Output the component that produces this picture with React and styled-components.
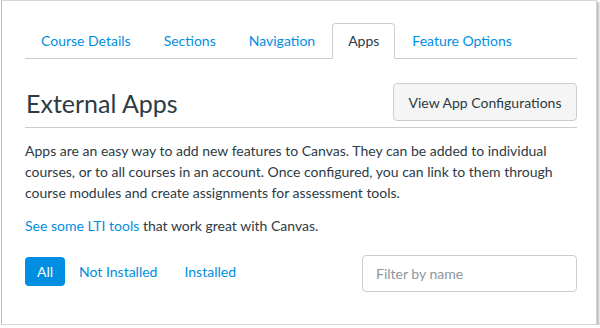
import React from 'react';
import styled, { createGlobalStyle } from 'styled-components';

const GlobalStyle = createGlobalStyle`
  html, body {
    margin: 0;
    padding: 0;
    background: #ffffff;
  }
  body {
    font-family: Lato, "Open Sans", "Liberation Sans", sans-serif;
    color: #2d3b45;
  }
`;

const Frame = styled.div`
  box-sizing: border-box;
  margin: 0 2px 0 1px;
  width: 596px;
  height: 325px;
  border: 1px solid #d6d6d6;
  border-left-color: #bdbdbd;
  box-shadow: 2px 2px 2px rgba(0, 0, 0, 0.28);
  padding: 21px 19px 0 23px;
`;

const TabBar = styled.div`
  display: flex;
  align-items: flex-end;
  height: 36px;
  border-bottom: 1px solid #c7cdd1;
`;

const Tab = styled.div`
  box-sizing: border-box;
  height: ${p => (p.active ? '36px' : '34px')};
  margin-bottom: ${p => (p.active ? '-1px' : '0')};
  padding: 0 15px 2px;
  margin-right: ${p => p.gap || 0}px;
  display: flex;
  align-items: center;
  font-size: 14px;
  color: ${p => (p.active ? '#2d3b45' : '#008ee2')};
  background: #ffffff;
  border: 1px solid ${p => (p.active ? '#c7cdd1' : 'transparent')};
  border-bottom-color: ${p => (p.active ? '#ffffff' : 'transparent')};
  border-radius: 4px 4px 0 0;
`;

const HeaderRow = styled.div`
  display: flex;
  justify-content: space-between;
  align-items: flex-end;
  height: 62px;
  padding-bottom: 6px;
  border-bottom: 1px solid #c7cdd1;
`;

const Title = styled.h1`
  margin: 0 0 3px;
  padding-left: 1px;
  font-size: 25px;
  line-height: 30px;
  font-weight: 400;
  color: #2d3b45;
`;

const Button = styled.button`
  box-sizing: border-box;
  width: 184px;
  height: 38px;
  background: #f5f5f5;
  border: 1px solid #c7cdd1;
  border-radius: 4px;
  font-family: inherit;
  font-size: 14px;
  color: #2d3b45;
  padding: 0;
`;

const Description = styled.p`
  margin: 12px 0 0;
  font-size: 14px;
  line-height: 21px;
  color: #2d3b45;
`;

const Link = styled.a`
  color: #008ee2;
  text-decoration: none;
`;

const Note = styled.p`
  margin: 12px 0 0;
  font-size: 14px;
  line-height: 21px;
`;

const FilterRow = styled.div`
  display: flex;
  align-items: flex-start;
  justify-content: space-between;
  margin-top: 19px;
`;

const Pills = styled.div`
  display: flex;
  align-items: center;
  margin-top: 2px;
`;

const Pill = styled.div`
  box-sizing: border-box;
  height: 29px;
  padding: ${p => (p.active ? '0 12px' : '0 13px 0 14px')};
  display: flex;
  align-items: center;
  border-radius: 4px;
  font-size: 14px;
  background: ${p => (p.active ? '#008ee2' : 'transparent')};
  color: ${p => (p.active ? '#ffffff' : '#008ee2')};
`;

const Search = styled.input`
  box-sizing: border-box;
  width: 215px;
  height: 37px;
  border: 1px solid #c7cdd1;
  border-radius: 4px;
  padding: 0 13px;
  font-family: inherit;
  font-size: 14px;
  color: #2d3b45;
  &::placeholder {
    color: #8b969e;
  }
`;

export default function App() {
  return (
    <>
      <GlobalStyle />
      <Frame>
        <TabBar>
          <Tab gap={1}>Course Details</Tab>
          <Tab gap={1}>Sections</Tab>
          <Tab gap={1}>Navigation</Tab>
          <Tab active gap={1}>Apps</Tab>
          <Tab>Feature Options</Tab>
        </TabBar>
        <HeaderRow>
          <Title>External Apps</Title>
          <Button>View App Configurations</Button>
        </HeaderRow>
        <Description>
          Apps are an easy way to add new features to Canvas. They can be added to individual
          courses, or to all courses in an account. Once configured, you can link to them through
          course modules and create assignments for assessment tools.
        </Description>
        <Note>
          <Link href="#">See some LTI tools</Link> that work great with Canvas.
        </Note>
        <FilterRow>
          <Pills>
            <Pill active>All</Pill>
            <Pill>Not Installed</Pill>
            <Pill>Installed</Pill>
          </Pills>
          <Search placeholder="Filter by name" />
        </FilterRow>
      </Frame>
    </>
  );
}
